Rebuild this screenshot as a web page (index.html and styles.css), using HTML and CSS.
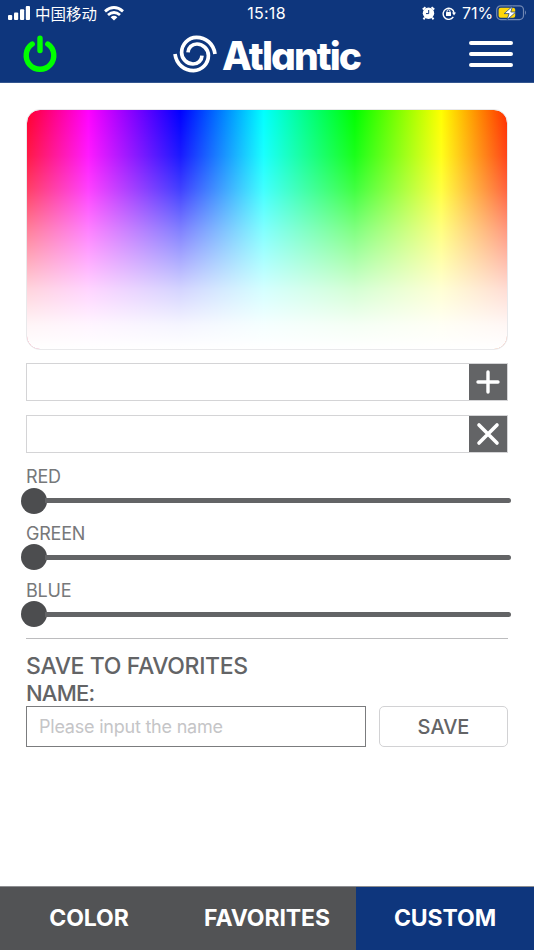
FILE: index.html
```html
<!DOCTYPE html>
<html lang="en">
<head>
<meta charset="utf-8">
<meta name="viewport" content="width=device-width, initial-scale=1">
<title>Atlantic</title>
<link rel="stylesheet" href="styles.css">
</head>
<body>
<header class="header">
  <div class="status">
    <div class="status-left">
      <svg class="signal" width="22" height="14" viewBox="0 0 22 14" fill="#fff"><rect x="0" y="9" width="4.2" height="5" rx="1"/><rect x="6" y="6.5" width="4.2" height="7.5" rx="1"/><rect x="12" y="3.3" width="4.2" height="10.7" rx="1"/><rect x="17.8" y="0" width="4.2" height="14" rx="1"/></svg>
      <span class="carrier">中国移动</span>
      <svg class="wifi" width="20" height="15" viewBox="0 0 20 15" fill="none" stroke="#fff" stroke-width="2.9"><path d="M1 5.4Q10-2.2 19 5.4M4 9Q10 4 16 9"/><path d="M6.6 11.2Q10 8.4 13.4 11.2L10 14.6Z" fill="#fff" stroke="none"/></svg>
    </div>
    <span class="clock">15:18</span>
    <div class="status-right">
      <svg width="13" height="14" viewBox="0 0 13 14"><circle cx="6.5" cy="7.3" r="5.7" fill="#fff"/><path d="M.8 3.5 3.5 1.2M9.5 1.2l2.7 2.3M2.8 11.5 1.5 13.3M10.2 11.5l1.3 1.8" stroke="#fff" stroke-width="2"/><path d="M6.7 4v3.6H4" fill="none" stroke="#0e367d" stroke-width="1"/></svg>
      <svg class="lock" width="14" height="14" viewBox="0 0 14 14"><path d="M11.3 10.8A5.5 5.5 0 1 1 12.1 7" fill="none" stroke="#fff" stroke-width="1.4"/><path d="M10 6.4h4l-2 3Z" fill="#fff"/><rect x="4" y="6" width="5" height="4" rx=".6" fill="#fff"/><path d="M5 6.5V5.3a1.5 1.5 0 0 1 3 0v1.2" fill="none" stroke="#fff"/></svg>
      <span class="percent">71%</span>
      <svg class="battery" width="31" height="16" viewBox="0 0 31 16"><rect x=".7" y=".8" width="26.8" height="13.8" rx="4" fill="none" stroke="#7188b4" stroke-width="1.2"/><path d="M29 5.3q2 2.4 0 4.8Z" fill="#7188b4"/><rect x="2.6" y="2.7" width="16.6" height="10" rx="2" fill="#ffd60a"/><path d="M16.5 1.3 8.2 8.6h4.9L11 14.8 19.8 7h-5Z" fill="#fff" stroke="#0e367d" stroke-width=".7"/></svg>
    </div>
  </div>
  <div class="bar">
    <svg class="power" width="36" height="40" viewBox="0 0 36 40" fill="none" stroke="#0f0" stroke-width="5.4" stroke-linecap="round"><path d="M10.2 10.1a13.8 13.8 0 1 0 15.6 0M18 4.2v12.4"/></svg>
    <div class="brand">
      <svg width="44" height="40" viewBox="-22 -20 44 40" fill="none" stroke="#fff" stroke-width="3.7"><g id="arm"><path d="M20 0C18.6-10.5 10.5-16.6 1.5-16.6C-7-16.6-13.4-9.5-13.4-1.5C-13.4 5-8 10-2 10C3 10 6.8 6.5 7 1.6"/></g><use href="#arm" transform="rotate(180)"/></svg>
      <span class="wordmark">Atlantic</span>
    </div>
    <svg class="menu" width="44" height="28" viewBox="0 0 44 28" stroke="#fff" stroke-width="4" stroke-linecap="round"><path d="M2 3h40M2 14h40M2 25h40"/></svg>
  </div>
</header>
<main class="content">
  <div class="picker"></div>
  <div class="swatches"><div class="slot"></div><button class="square"><svg width="24" height="24" viewBox="0 0 24 24" stroke="#fff" stroke-width="3.4" stroke-linecap="round"><path d="M2 12h20M12 2v20"/></svg></button></div>
  <div class="swatches"><div class="slot"></div><button class="square"><svg width="24" height="24" viewBox="0 0 24 24" stroke="#fff" stroke-width="3.6" stroke-linecap="round"><path d="m3 3 18 18M21 3 3 21"/></svg></button></div>
  <div class="sliders">
    <div class="slider"><span class="label">RED</span><div class="track"><i class="thumb"></i><i class="line"></i></div></div>
    <div class="slider"><span class="label">GREEN</span><div class="track"><i class="thumb"></i><i class="line"></i></div></div>
    <div class="slider"><span class="label">BLUE</span><div class="track"><i class="thumb"></i><i class="line"></i></div></div>
  </div>
  <section class="favorites">
    <div class="heading">SAVE TO FAVORITES</div>
    <div class="heading">NAME:</div>
    <div class="form"><input class="name" type="text" placeholder="Please input the name"><button class="save">SAVE</button></div>
  </section>
</main>
<nav class="tabs"><a class="tab">COLOR</a><a class="tab">FAVORITES</a><a class="tab active">CUSTOM</a></nav>
</body>
</html>
```
FILE: styles.css
```css
* { box-sizing: border-box; }
body { margin: 0; height: 950px; display: flex; flex-direction: column; background: #fff; font-family: Inter, "Noto Sans CJK SC", sans-serif; color: #636466; overflow: hidden; }
svg { display: block; flex: none; }
button { padding: 0; font-family: inherit; color: inherit; }
.header { flex: none; height: 83px; background: #0e367d; color: #fff; border-bottom: 1px solid #33558f; }
.status { height: 26px; display: grid; grid-template-columns: 1fr auto 1fr; align-items: center; padding: 0 7px 0 8px; font-size: 16px; line-height: 26px; }
.status-left, .status-right { display: flex; align-items: center; }
.status-right { justify-content: flex-end; }
.carrier { font-family: "Noto Sans CJK SC", sans-serif; font-size: 15.5px; line-height: 24px; margin: 0 7px 1px 5px; }
.clock { letter-spacing: .3px; margin-right: 2px; }
.lock { margin-left: 7px; }
.percent { margin: 0 3px 0 6px; letter-spacing: -.1px; }
.bar { height: 56px; display: grid; grid-template-columns: 60px 1fr 60px; align-items: center; padding: 0 21px 0 22px; }
.menu { justify-self: end; }
.brand { display: flex; align-items: center; justify-content: center; gap: 5px; margin-right: 2px; }
.wordmark { font-size: 39px; line-height: 50px; padding-top: 3px; font-weight: 800; letter-spacing: -1.95px; font-feature-settings: "cv11"; }
.content { flex: 1; padding: 26px 26px 0; }
.picker { height: 241px; border: 1px solid #e9e9eb; border-radius: 14px; background: linear-gradient(to bottom, rgba(255,255,255,0), rgba(255,255,255,.1) 19%, rgba(255,255,255,.25) 33%, rgba(255,255,255,.5) 50%, rgba(255,255,255,.83) 75%, rgba(255,255,255,.96) 90%, #fff) padding-box, linear-gradient(to right, #ff0030 0%, #f0f 12.8%, #00f 32%, #0ff 49.3%, #0f0 68.3%, #ff0 86.3%, #ff3000 100%) padding-box; }
.swatches { display: flex; height: 38px; margin-top: 13px; border: 1px solid #d4d4d6; }
.swatches + .swatches { margin-top: 14px; }
.slot { flex: 1; }
.square { width: 38px; border: 0; background: #636466; display: grid; place-items: center; }
.sliders { margin-top: 14px; height: 171px; }
.slider { height: 56.8px; }
.label { display: block; font-size: 18px; line-height: 20px; color: #77787a; letter-spacing: -.2px; }
.track { display: flex; align-items: center; height: 27px; margin: 0 -3px 0 -5px; }
.thumb { width: 26px; height: 26px; border-radius: 50%; background: #4c4d4f; }
.line { flex: 1; height: 5px; margin-left: -2px; border-radius: 0 3px 3px 0; background: #636466; }
.favorites { border-top: 1px solid #bcbcbe; padding-top: 14px; }
.heading { font-size: 23px; line-height: 27px; font-weight: 500; letter-spacing: -.37px; }
.heading + .heading { font-size: 22px; letter-spacing: -.8px; }
.form { display: flex; gap: 13px; height: 41px; margin-top: -1px; }
.name { width: 340px; padding: 0 12px; border: 1px solid #7b7c7e; font: 18px Inter, sans-serif; letter-spacing: -.22px; }
.name::placeholder { color: #c5c5c7; opacity: 1; }
.save { flex: 1; border: 1px solid #d2d2d4; border-radius: 5px; background: #fff; font-size: 20px; font-weight: 500; }
.tabs { display: grid; grid-template-columns: repeat(3, 1fr); height: 64px; border-top: 1px solid #8d8e91; background: #525355; color: #fff; flex: none; }
.tab { display: grid; place-items: center; padding-bottom: 2px; font-size: 23px; font-weight: 650; letter-spacing: -.1px; }
.active { background: #0e367d; }
```
